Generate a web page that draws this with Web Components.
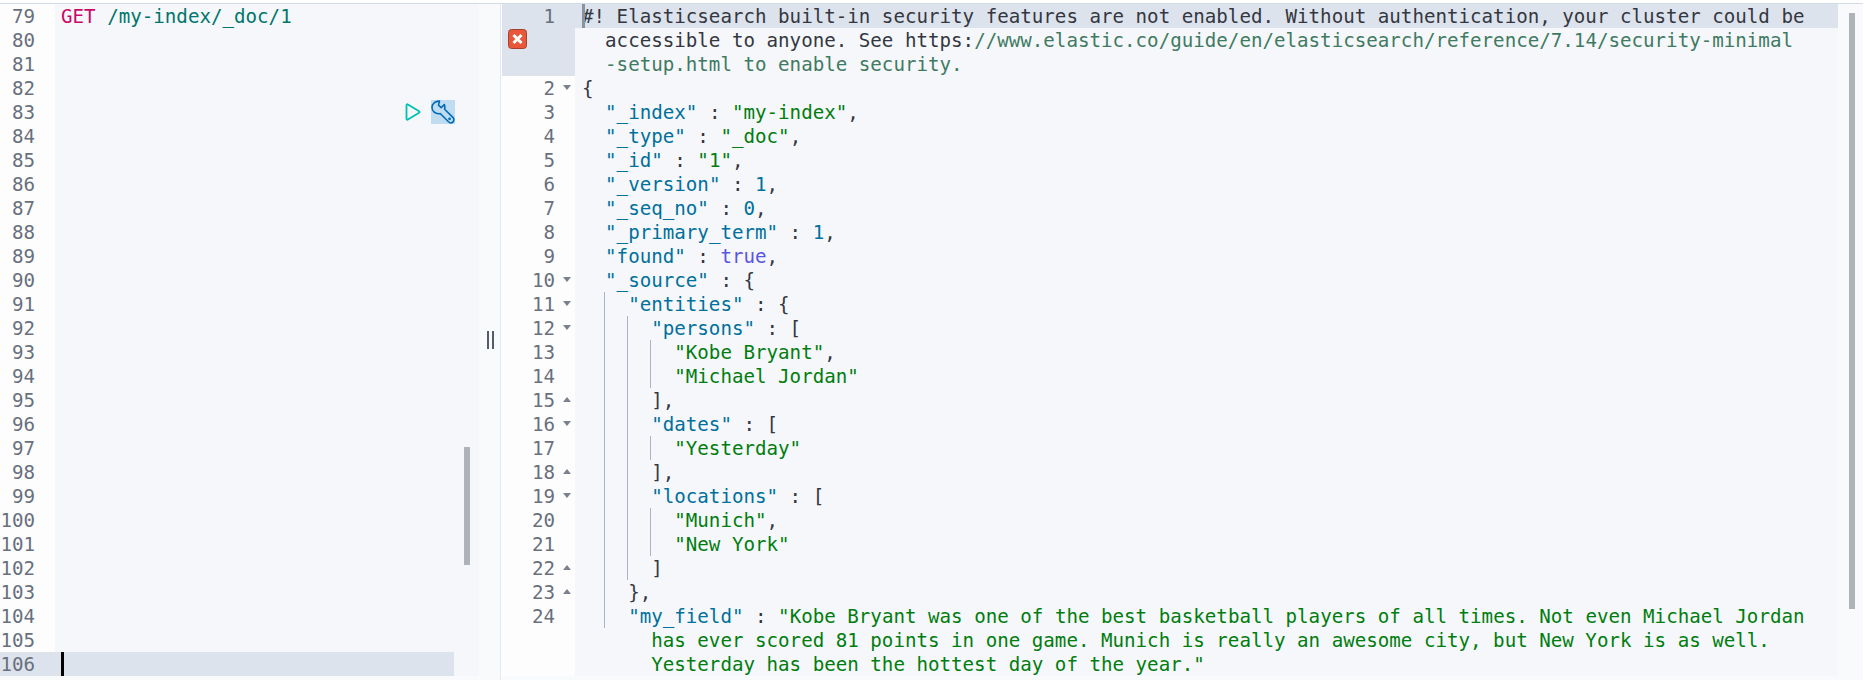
<!DOCTYPE html>
<html>
<head>
<meta charset="utf-8">
<title>Console</title>
<style>
  html, body { margin: 0; background: #fff; }
</style>
</head>
<body>

<es-console>
  <editor-pane side="left">
    <code-row num="79"><c-t k="method">GET</c-t> <c-t k="url">/my-index/_doc/1</c-t></code-row>
    <code-row num="80"></code-row>
    <code-row num="81"></code-row>
    <code-row num="82"></code-row>
    <code-row num="83"></code-row>
    <code-row num="84"></code-row>
    <code-row num="85"></code-row>
    <code-row num="86"></code-row>
    <code-row num="87"></code-row>
    <code-row num="88"></code-row>
    <code-row num="89"></code-row>
    <code-row num="90"></code-row>
    <code-row num="91"></code-row>
    <code-row num="92"></code-row>
    <code-row num="93"></code-row>
    <code-row num="94"></code-row>
    <code-row num="95"></code-row>
    <code-row num="96"></code-row>
    <code-row num="97"></code-row>
    <code-row num="98"></code-row>
    <code-row num="99"></code-row>
    <code-row num="100"></code-row>
    <code-row num="101"></code-row>
    <code-row num="102"></code-row>
    <code-row num="103"></code-row>
    <code-row num="104"></code-row>
    <code-row num="105"></code-row>
    <code-row num="106" active="all" cursor="#000"></code-row>
    <request-actions slot="overlay"></request-actions>
    <pane-scrollbar slot="overlay" style="left:464px;top:443px;height:118px"></pane-scrollbar>
    <pane-resizer slot="overlay"></pane-resizer>
  </editor-pane>

  <editor-pane side="right">
    <code-row num="1" active="first" cursor="#8a93a0" error>#! Elasticsearch built-in security features are not enabled. Without authentication, your cluster could be
  accessible to anyone. See https:<c-t k="link">//www.elastic.co/guide/en/elasticsearch/reference/7.14/security-minimal
  -setup.html to enable security.</c-t></code-row>
    <code-row num="2" fold="down">{</code-row>
    <code-row num="3">  <c-t k="key">"_index"</c-t> : <c-t k="str">"my-index"</c-t>,</code-row>
    <code-row num="4">  <c-t k="key">"_type"</c-t> : <c-t k="str">"_doc"</c-t>,</code-row>
    <code-row num="5">  <c-t k="key">"_id"</c-t> : <c-t k="str">"1"</c-t>,</code-row>
    <code-row num="6">  <c-t k="key">"_version"</c-t> : <c-t k="key">1</c-t>,</code-row>
    <code-row num="7">  <c-t k="key">"_seq_no"</c-t> : <c-t k="key">0</c-t>,</code-row>
    <code-row num="8">  <c-t k="key">"_primary_term"</c-t> : <c-t k="key">1</c-t>,</code-row>
    <code-row num="9">  <c-t k="key">"found"</c-t> : <c-t k="bool">true</c-t>,</code-row>
    <code-row num="10" fold="down">  <c-t k="key">"_source"</c-t> : {</code-row>
    <code-row num="11" fold="down" guides="2">    <c-t k="key">"entities"</c-t> : {</code-row>
    <code-row num="12" fold="down" guides="2 4">      <c-t k="key">"persons"</c-t> : [</code-row>
    <code-row num="13" guides="2 4 6">        <c-t k="str">"Kobe Bryant"</c-t>,</code-row>
    <code-row num="14" guides="2 4 6">        <c-t k="str">"Michael Jordan"</c-t></code-row>
    <code-row num="15" fold="up" guides="2 4">      ],</code-row>
    <code-row num="16" fold="down" guides="2 4">      <c-t k="key">"dates"</c-t> : [</code-row>
    <code-row num="17" guides="2 4 6">        <c-t k="str">"Yesterday"</c-t></code-row>
    <code-row num="18" fold="up" guides="2 4">      ],</code-row>
    <code-row num="19" fold="down" guides="2 4">      <c-t k="key">"locations"</c-t> : [</code-row>
    <code-row num="20" guides="2 4 6">        <c-t k="str">"Munich"</c-t>,</code-row>
    <code-row num="21" guides="2 4 6">        <c-t k="str">"New York"</c-t></code-row>
    <code-row num="22" fold="up" guides="2 4">      ]</code-row>
    <code-row num="23" fold="up" guides="2">    },</code-row>
    <code-row num="24" guides="2">    <c-t k="key">"my_field"</c-t> : <c-t k="str">"Kobe Bryant was one of the best basketball players of all times. Not even Michael Jordan
      has ever scored 81 points in one game. Munich is really an awesome city, but New York is as well.
      Yesterday has been the hottest day of the year."</c-t></code-row>
    <pane-scrollbar slot="overlay" style="left:1347px;top:9px;height:596px"></pane-scrollbar>
  </editor-pane>
</es-console>

<script>
(function () {

  // ====== PAGE SHELL ======
  class EsConsole extends HTMLElement {
    constructor() {
      super();
      this.attachShadow({ mode: "open" }).innerHTML = `
        <style>
          :host {
            display: block;
            width: 1863px;
            height: 680px;
            box-sizing: border-box;
            padding-top: 3px;
            overflow: hidden;
            font-family: "DejaVu Sans Mono", monospace;
            font-size: 19.17px;
            line-height: 24px;
            color: #343741;
          }
          .wrap {
            display: flex;
            border-top: 1px solid #d3dae6;
          }
        </style>
        <div class="wrap"><slot></slot></div>
      `;
    }
  }

  // ====== ONE EDITOR ======
  class EditorPane extends HTMLElement {
    constructor() {
      super();
      this.attachShadow({ mode: "open" }).innerHTML = `
        <style>
          :host {
            display: block;
            position: relative;
            height: 676px;
            background: #f9fafc;
          }
          :host([side="left"]) {
            flex: none;
            width: 500px;
            border-right: 1px solid #e3e7ef;
            margin-right: 1px;
            --gutter-w: 55px;
            --gutter-pad: 20px;
            --fold-w: 0px;
            --code-pad: 6px;
            --rows-w: 479px;
            --band-w: 399px;
          }
          :host([side="right"]) {
            flex: 1;
            --gutter-w: 73px;
            --gutter-pad: 0px;
            --fold-w: 20px;
            --code-pad: 7px;
            --rows-w: 1336px;
            --band-w: 1263px;
          }
          .rows { width: var(--rows-w); }
        </style>
        <div class="rows"><slot></slot></div>
        <slot name="overlay"></slot>
      `;
    }
  }

  // ====== ONE LOGICAL LINE ======
  class CodeRow extends HTMLElement {
    constructor() {
      super();
      this.attachShadow({ mode: "open" });
    }

    connectedCallback() {
      const fold = this.getAttribute("fold");
      const guides = (this.getAttribute("guides") || "").split(" ").filter(Boolean);
      const cursor = this.getAttribute("cursor");

      this.shadowRoot.innerHTML = `
        <style>
          :host {
            display: flex;
            position: relative;
          }
          .gutter {
            flex: none;
            width: var(--gutter-w);
            box-sizing: border-box;
            padding-right: var(--gutter-pad);
            display: flex;
            justify-content: flex-end;
            background: #fdfdfe;
            color: #69707d;
          }
          :host([active]) .gutter { background: #dde3ec; }
          .num { padding-top: 1px; margin-bottom: -1px; }
          .fold {
            flex: none;
            width: var(--fold-w);
            position: relative;
          }
          .fold i {
            position: absolute;
            left: 8px;
            top: 9px;
            width: 0;
            height: 0;
            border-left: 4.5px solid transparent;
            border-right: 4.5px solid transparent;
          }
          .fold .down { border-top: 5px solid #7b818c; }
          .fold .up { border-bottom: 5px solid #7b818c; }
          .code {
            flex: 1;
            min-width: 0;
            min-height: 24px;
            box-sizing: border-box;
            padding-left: var(--code-pad);
            background: #f5f7fa;
            position: relative;
          }
          .text { display: block; white-space: pre; padding-top: 1px; margin-bottom: -1px; }
          :host([active]) .code {
            background: linear-gradient(#dde3ec, #dde3ec) no-repeat 0 0 / var(--band-w) 24px, #f5f7fa;
          }
          .guide {
            position: absolute;
            top: 0;
            width: 1px;
            height: 24px;
            background: #abb4c6;
          }
          .cursor {
            position: absolute;
            top: 0;
            left: calc(var(--code-pad) - 0.5px);
            width: 3px;
            height: 24px;
          }
          .err {
            position: absolute;
            left: 6px;
            top: 25px;
            width: 19px;
            height: 20px;
          }
        </style>
        <div class="gutter">
          <span class="num">${this.getAttribute("num")}</span>
          <span class="fold">${fold ? `<i class="${fold}"></i>` : ""}</span>
        </div>
        <div class="code">
          ${guides.map(g => `<span class="guide" style="left:calc(var(--code-pad) + ${g * 11.54 - 1.5}px)"></span>`).join("")}
          ${cursor ? `<span class="cursor" style="background:${cursor}"></span>` : ""}
          <span class="text"><slot></slot></span>
        </div>
        ${this.hasAttribute("error") ? `
          <svg class="err" viewBox="0 0 19 20">
            <rect x="0.5" y="0.5" width="18" height="19" rx="3" fill="#e8573a" stroke="#a5412f"/>
            <path d="M5.5 6l8 8M13.5 6l-8 8" stroke="#fff" stroke-width="3"/>
          </svg>` : ""}
      `;
    }
  }

  // ====== SYNTAX TOKEN ======
  class CodeToken extends HTMLElement {
    constructor() {
      super();
      this.attachShadow({ mode: "open" }).innerHTML =
        `<style>
          :host([k="method"]) { color: #c80a68; }
          :host([k="url"]) { color: #00756c; }
          :host([k="key"]) { color: #00709c; }
          :host([k="str"]) { color: #017d0f; }
          :host([k="bool"]) { color: #5a55e0; }
          :host([k="link"]) { color: #3f7a62; }
        </style><slot></slot>`;
    }
  }

  // ====== PLAY + WRENCH ======
  class RequestActions extends HTMLElement {
    constructor() {
      super();
      this.attachShadow({ mode: "open" }).innerHTML = `
        <style>
          :host {
            position: absolute;
            left: 405px;
            top: 96px;
            display: flex;
            align-items: center;
            gap: 10px;
          }
          svg { display: block; fill: none; }
          .tool { background: #bfdcf1; }
        </style>
        <svg width="16" height="18" viewBox="0 0 16 18">
          <path d="M1.5 2.2c0-.8.8-1.2 1.4-.8l11.2 6.8c.6.4.6 1.200 0 1.600L2.900 16.600c-.6.4-1.400 0-1.400-.8z" stroke="#00bfb3" stroke-width="1.800"/>
        </svg>
        <svg class="tool" width="24" height="24" viewBox="0 0 24 24">
          <path d="M8.500 1.100C4.300 .8 1 3.800 1 7.400c0 3.500 3 6.300 6.600 6.300.6 0 1.100-.1 1.600-.2l8.300 8.300c1.300 1.300 3.300 1.300 4.500.1 1.200-1.200 1.200-3.200-.1-4.500l-8.300-8.200c.4-1.500.3-3.200-.3-4.600l-3.100 3-2.700-2.500z" stroke="#006bb4" stroke-width="1.600" stroke-linejoin="round"/>
          <circle cx="18.600" cy="18.800" r="1.400" fill="#006bb4"/>
        </svg>
      `;
    }
  }

  // ====== SCROLLBAR THUMB ======
  class PaneScrollbar extends HTMLElement {
    constructor() {
      super();
      this.attachShadow({ mode: "open" }).innerHTML = `
        <style>
          :host {
            position: absolute;
            width: 6px;
            background: #aeb3ba;
          }
        </style>
      `;
    }
  }

  // ====== RESIZE GRIP ======
  class PaneResizer extends HTMLElement {
    constructor() {
      super();
      this.attachShadow({ mode: "open" }).innerHTML = `
        <style>
          :host {
            position: absolute;
            left: 487px;
            top: 327px;
            display: flex;
            gap: 3px;
          }
          i { width: 2px; height: 18px; background: #555b6b; }
        </style>
        <i></i><i></i>
      `;
    }
  }

  customElements.define("es-console", EsConsole);
  customElements.define("editor-pane", EditorPane);
  customElements.define("code-row", CodeRow);
  customElements.define("c-t", CodeToken);
  customElements.define("request-actions", RequestActions);
  customElements.define("pane-scrollbar", PaneScrollbar);
  customElements.define("pane-resizer", PaneResizer);

})();
</script>
</body>
</html>
